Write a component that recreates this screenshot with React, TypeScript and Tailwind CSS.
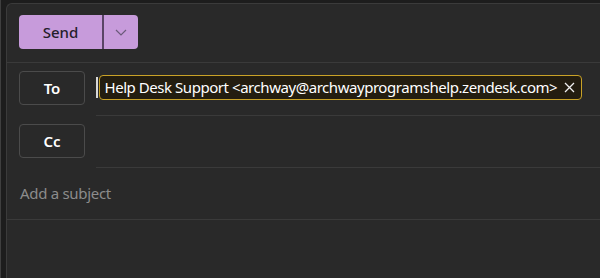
import React from "react";

export default function App() {
  return (
    <div
      className="w-[600px] h-[278px] bg-[#1d1d1d] border-l border-[#3f3f3f] pl-[5px] pt-[3px] overflow-hidden"
      style={{ fontFamily: '"Noto Sans", "Open Sans", sans-serif' }}
    >
      <div className="h-full bg-[#292929] border-l border-t border-[#3b3b3b] rounded-tl-[6px] flex flex-col">
        {/* toolbar */}
        <div className="h-[59px] shrink-0 border-b border-[#3a3a3a] pl-[12px] pt-[11px]">
          <div className="flex h-[34px] w-[119px] rounded-[4px] overflow-hidden bg-[#c79bdb]">
            <button className="w-[85px] h-full flex items-center justify-center text-[15px] font-medium text-[#241d2a] border-r-2 border-[#5a4466]">
              Send
            </button>
            <button className="flex-1 h-full flex items-center justify-center">
              <svg width="12" height="7" viewBox="0 0 12 7" fill="none">
                <path d="M1 1l5 5 5-5" stroke="#6b5a7a" strokeWidth="1.2" />
              </svg>
            </button>
          </div>
        </div>
        {/* To row */}
        <div className="flex h-[53px] shrink-0">
          <div className="w-[89px] shrink-0 pl-[12px] pt-[8px]">
            <div className="w-[66px] h-[34px] rounded-[4px] border border-[#4b4b4b] flex items-center justify-center text-[15px] font-semibold text-white">
              To
            </div>
          </div>
          <div className="flex-1 border-b border-[#3a3a3a] pt-[12px] flex items-start">
            <div className="w-[1.5px] h-[21px] bg-[#d8d8d8] mt-[2px] mr-[1px]" />
            <div className="h-[25px] w-[483px] rounded-[4px] border-[1.5px] border-[#c9a227] bg-[#231d10] flex items-center pl-[5px] pr-[6px] text-[15px] text-white tracking-[-0.45px] whitespace-nowrap">
              <span>Help Desk Support &lt;archway@archwayprogramshelp.zendesk.com&gt;</span>
              <svg className="ml-auto shrink-0" width="11" height="11" viewBox="0 0 11 11" fill="none">
                <path d="M1 1l9 9M10 1l-9 9" stroke="#f0f0f0" strokeWidth="1.3" />
              </svg>
            </div>
          </div>
        </div>
        {/* Cc row */}
        <div className="flex h-[52px] shrink-0">
          <div className="w-[89px] shrink-0 pl-[12px] pt-[8px]">
            <div className="w-[66px] h-[34px] rounded-[4px] border border-[#4b4b4b] flex items-center justify-center text-[15px] font-semibold text-white">
              Cc
            </div>
          </div>
          <div className="flex-1 border-b border-[#3a3a3a]" />
        </div>
        {/* Subject */}
        <div className="h-[52px] shrink-0 border-b border-[#3a3a3a] flex items-center pl-[13px] text-[15px] tracking-[-0.3px] text-[#8c8c8c]">
          Add a subject
        </div>
        <div className="flex-1" />
      </div>
    </div>
  );
}
